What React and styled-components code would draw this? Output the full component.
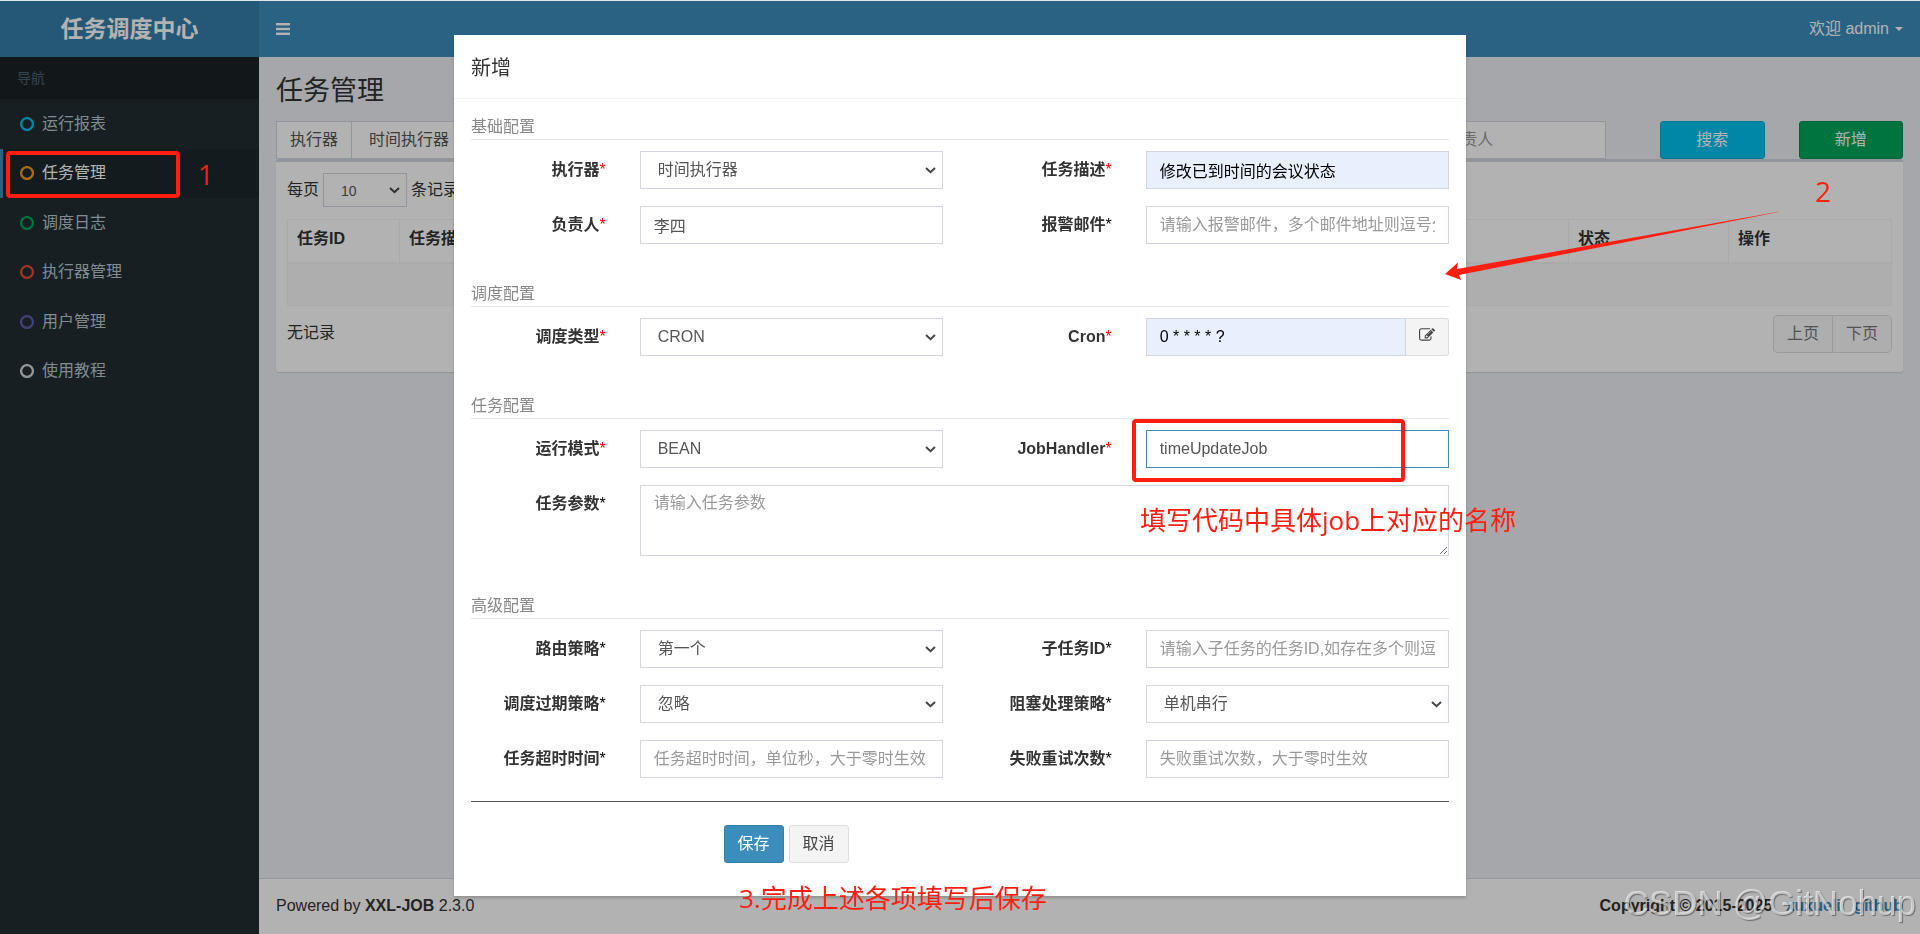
import React, { useState } from 'react';
import styled, { createGlobalStyle } from 'styled-components';

const chevron = `url("data:image/svg+xml,%3Csvg xmlns='http://www.w3.org/2000/svg' width='11' height='7' viewBox='0 0 11 7'%3E%3Cpath d='M1 1l4.5 4.2L10 1' fill='none' stroke='%23444' stroke-width='2'/%3E%3C/svg%3E")`;

const GlobalStyle = createGlobalStyle`
	*, *::before, *::after {
		box-sizing: border-box;
	}
	body {
		margin: 0;
		background: #ecf0f5;
		color: #333;
		font-family: "Liberation Sans", "Noto Sans CJK SC", sans-serif;
		font-size: 16px;
		line-height: 22px;
	}
	input, select, textarea, button {
		font: inherit;
	}
	a {
		color: #3c8dbc;
		text-decoration: none;
	}
`;

const TopLine = styled.div`
	height: 1px;
	background: #dfe6e3;
`;
const Shell = styled.div`
	display: grid;
	grid-template-columns: 259px minmax(0, 1fr);
	min-height: calc(100vh - 1px);
`;
const Sidebar = styled.aside`
	background: #222d32;
`;
const Logo = styled.a`
	display: block;
	height: 56px;
	background: #367fa9;
	color: #fff;
	font-size: 23px;
	font-weight: bold;
	line-height: 56px;
	text-align: center;
`;
const NavTitle = styled.div`
	height: 42px;
	padding: 10px 17px;
	background: #1a2226;
	color: #4b646f;
	font-size: 14px;
`;
const NavList = styled.nav`
	display: grid;
	grid-auto-rows: 1fr;
	height: 297px;
`;
const NavLink = styled.a`
	display: flex;
	align-items: center;
	gap: 8px;
	padding-left: 17px;
	border-left: 3px solid ${p => (p.$active ? '#3c8dbc' : 'transparent')};
	background: ${p => (p.$active ? '#1e282c' : 'transparent')};
	color: ${p => (p.$active ? '#fff' : '#b8c7ce')};
`;
const Main = styled.div`
	display: flex;
	flex-direction: column;
`;
const Navbar = styled.header`
	display: flex;
	align-items: center;
	justify-content: space-between;
	height: 56px;
	padding: 0 17px;
	background: #3c8dbc;
	color: #fff;
`;
const ToggleButton = styled.button`
	display: flex;
	padding: 0;
	border: 0;
	background: none;
	color: #fff;
`;
const UserLink = styled.a`
	display: flex;
	align-items: center;
	gap: 6px;
	color: #fff;
`;
const Caret = styled.span`
	border: 4px solid transparent;
	border-top-color: #fff;
	border-bottom: 0;
`;
const Content = styled.main`
	flex: 1;
	padding: 17px;
`;
const PageTitle = styled.h1`
	margin: 0 0 13px;
	font-size: 27px;
	font-weight: normal;
	line-height: 34px;
`;
const Filters = styled.div`
	display: grid;
	grid-template-columns: repeat(12, minmax(0, 1fr));
	margin: 0 -17px;
`;
const FilterCell = styled.div`
	display: flex;
	grid-column: span ${p => p.$span};
	padding: 0 17px;
`;
const Addon = styled.label`
	flex: none;
	padding: 7px 13px;
	border: 1px solid #d2d6de;
	border-right: 0;
	background: #fff;
	color: #555;
`;
const Input = styled.input`
	display: block;
	width: 100%;
	min-width: 0;
	height: 38px;
	padding: 6px 13px;
	border: 1px solid ${p => (p.$current ? '#3c8dbc' : '#d2d6de')};
	border-radius: 0;
	outline: 0;
	background: ${p => (p.$filled ? '#e8f0fe' : '#fff')};
	color: ${p => (p.$filled ? '#000' : '#555')};
	&::placeholder {
		color: #999;
	}
`;
const AuthorInput = styled(Input)`
	width: 223px;
`;
const Select = styled.select`
	display: block;
	width: 100%;
	min-width: 0;
	height: 38px;
	padding: 6px 17px;
	border: 1px solid #d2d6de;
	border-radius: 0;
	appearance: none;
	background: #fff ${chevron} no-repeat right 6px center;
	color: #555;
`;
const LengthSelect = styled(Select)`
	width: 84px;
	height: 34px;
	font-size: 14px;
`;
const TextArea = styled.textarea`
	display: block;
	width: 100%;
	height: 71px;
	padding: 6px 13px;
	border: 1px solid #d2d6de;
	outline: 0;
	color: #555;
	&::placeholder {
		color: #999;
	}
`;
const colors = {
	info: ['#00c0ef', '#00acd6', '#fff'],
	success: ['#00a65a', '#008d4c', '#fff'],
	primary: ['#3c8dbc', '#367fa9', '#fff'],
	plain: ['#f4f4f4', '#ddd', '#444'],
};
const Button = styled.button`
	width: ${p => (p.$block ? '100%' : 'auto')};
	height: 38px;
	padding: 0 13px;
	border: 1px solid ${p => colors[p.$kind][1]};
	border-radius: 3px;
	background: ${p => colors[p.$kind][0]};
	color: ${p => colors[p.$kind][2]};
`;
const Box = styled.section`
	padding: 11px;
	border-top: 3px solid #d2d6de;
	border-radius: 3px;
	background: #fff;
	box-shadow: 0 1px 1px rgba(0, 0, 0, 0.1);
`;
const LengthLabel = styled.label`
	display: flex;
	align-items: center;
	gap: 4px;
`;
const Table = styled.table`
	width: 100%;
	margin: 12px 0 9px;
	border: 1px solid #f4f4f4;
	border-spacing: 0;
	table-layout: fixed;
`;
const Th = styled.th`
	width: ${p => p.$width || 'auto'};
	height: 44px;
	padding: 8px 9px;
	border-right: 1px solid #f4f4f4;
	border-bottom: 2px solid #f4f4f4;
	text-align: left;
	vertical-align: top;
	&:last-child {
		border-right: 0;
	}
`;
const Td = styled.td`
	height: 41px;
	background: #f9f9f9;
`;
const TableFooter = styled.div`
	display: flex;
	justify-content: space-between;
	align-items: flex-start;
	padding-bottom: 8px;
`;
const TableInfo = styled.div`
	padding-top: 7px;
`;
const Pager = styled.div`
	display: flex;
`;
const PageButton = styled.button`
	height: 38px;
	padding: 0 13px;
	border: 1px solid #ddd;
	border-radius: ${p => (p.$last ? '0 5px 5px 0' : '5px 0 0 5px')};
	border-right-width: ${p => (p.$last ? '1px' : 0)};
	background: #fafafa;
	color: #777;
`;
const Footer = styled.footer`
	display: flex;
	justify-content: space-between;
	padding: 16px 17px 17px;
	border-top: 1px solid #d2d6de;
	background: #fff;
`;

const Backdrop = styled.div`
	position: fixed;
	inset: 1px 0 0;
	display: flex;
	align-items: flex-start;
	justify-content: center;
	padding-top: 34px;
	background: rgba(0, 0, 0, 0.3);
`;
const Modal = styled.div`
	position: relative;
	width: 1012px;
	max-width: 100%;
	background: #fff;
	box-shadow: 0 2px 3px rgba(0, 0, 0, 0.2);
`;
const ModalHeader = styled.header`
	padding: 22px 17px 19px;
	border-bottom: 1px solid #f4f4f4;
`;
const ModalTitle = styled.h4`
	margin: 0;
	font-size: 20px;
	font-weight: normal;
	line-height: 22px;
`;
const Form = styled.form`
	padding: 17px 17px 16px;
`;
const Section = styled.section`
	& + & {
		padding-top: 22px;
	}
`;
const SectionTitle = styled.h5`
	margin: 0 0 11px;
	height: 24px;
	border-bottom: 1px solid #e5e5e5;
	color: #888;
	font-size: 16px;
	font-weight: normal;
	line-height: 22px;
`;
const FormRow = styled.div`
	display: grid;
	grid-template-columns: minmax(0, 2fr) minmax(0, 4fr) minmax(0, 2fr) minmax(0, 4fr);
	margin: 0 -17px 17px;
`;
const FieldLabel = styled.label`
	padding: 8px 17px 0;
	font-weight: bold;
	text-align: right;
`;
const Star = styled.span`
	color: ${p => (p.$required ? 'red' : '#000')};
	font-weight: normal;
`;
const FieldCell = styled.div`
	display: flex;
	grid-column: span ${p => (p.$wide ? 3 : 1)};
	padding: 0 17px;
`;
const EditButton = styled.button`
	flex: none;
	display: flex;
	align-items: center;
	justify-content: center;
	width: 43px;
	height: 38px;
	padding: 0 0 4px;
	border: 1px solid #ddd;
	border-left: 0;
	border-radius: 0 3px 3px 0;
	background: #f4f4f4;
	color: #444;
`;
const Divider = styled.hr`
	margin: 23px 0;
	border: 0;
	border-top: 1px solid #555;
`;
const Actions = styled.div`
	display: flex;
	gap: 5px;
	margin-bottom: 17px;
	padding-left: calc(25% + 8px);
`;

const red = '#ff1e10';
const Frame = styled.div`
	position: absolute;
	left: ${p => p.$left}px;
	top: ${p => p.$top}px;
	width: ${p => p.$width}px;
	height: ${p => p.$height}px;
	border: 4px solid ${red};
	border-radius: 4px;
	pointer-events: none;
`;
const Note = styled.div`
	position: absolute;
	${p => (p.$right ? `right: ${p.$right}px` : `left: ${p.$left}px`)};
	top: ${p => p.$top}px;
	color: ${red};
	font-family: "Open Sans", "Noto Sans CJK SC", sans-serif;
	font-size: ${p => p.$size}px;
	line-height: 32px;
	white-space: nowrap;
	pointer-events: none;
`;
const Arrow = styled.svg`
	position: absolute;
	left: 991px;
	top: 173px;
	pointer-events: none;
`;
const Watermark = styled.div`
	position: fixed;
	right: 4px;
	bottom: 12px;
	color: rgba(255, 255, 255, 0.6);
	font-size: 35px;
	line-height: 38px;
	text-shadow: 1px 1px 1px rgba(0, 0, 0, 0.4);
	pointer-events: none;
`;

const navItems = [
	['运行报表', '#00c0ef'],
	['任务管理', '#f39c12'],
	['调度日志', '#00a65a'],
	['执行器管理', '#dd4b39'],
	['用户管理', '#605ca8'],
	['使用教程', '#d2d6de'],
];

const sections = [
	{
		title: '基础配置',
		rows: [
			[
				{ id: 'jobGroup', label: '执行器', required: true, options: ['时间执行器'] },
				{ id: 'jobDesc', label: '任务描述', required: true, value: '修改已到时间的会议状态', filled: true },
			],
			[
				{ id: 'author', label: '负责人', required: true, value: '李四' },
				{ id: 'alarmEmail', label: '报警邮件', placeholder: '请输入报警邮件，多个邮件地址则逗号分隔' },
			],
		],
	},
	{
		title: '调度配置',
		rows: [
			[
				{ id: 'scheduleType', label: '调度类型', required: true, options: ['CRON', '无', '固定速度'] },
				{ id: 'cron', label: 'Cron', required: true, value: '0 * * * * ?', filled: true, editable: true },
			],
		],
	},
	{
		title: '任务配置',
		rows: [
			[
				{ id: 'glueType', label: '运行模式', required: true, options: ['BEAN'] },
				{ id: 'handler', label: 'JobHandler', required: true, value: 'timeUpdateJob', current: true },
			],
			[{ id: 'param', label: '任务参数', placeholder: '请输入任务参数', multiline: true }],
		],
	},
	{
		title: '高级配置',
		rows: [
			[
				{ id: 'route', label: '路由策略', options: ['第一个', '最后一个', '轮询'] },
				{ id: 'childJob', label: '子任务ID', placeholder: '请输入子任务的任务ID,如存在多个则逗号分隔' },
			],
			[
				{ id: 'misfire', label: '调度过期策略', options: ['忽略', '立即执行一次'] },
				{ id: 'block', label: '阻塞处理策略', options: ['单机串行', '丢弃后续调度'] },
			],
			[
				{ id: 'timeout', label: '任务超时时间', placeholder: '任务超时时间，单位秒，大于零时生效' },
				{ id: 'retry', label: '失败重试次数', placeholder: '失败重试次数，大于零时生效' },
			],
		],
	},
];

const initialValues = {};
sections.forEach(s => s.rows.flat().forEach(f => {
	initialValues[f.id] = f.value || (f.options ? f.options[0] : '');
}));

const EditIcon = () => (
	<svg width="16" height="16" viewBox="0 0 1792 1792" fill="currentColor">
		<path d="M888 1184l116-116-152-152-116 116v56h96v96h56zm440-720q-16-16-33 1l-350 350q-17 17-1 33t33-1l350-350q17-17 1-33zm80 594v190q0 119-84.5 203.5t-203.5 84.5h-832q-119 0-203.5-84.5t-84.5-203.5v-832q0-119 84.5-203.5t203.5-84.5h832q63 0 117 25 15 7 18 23 3 17-9 29l-49 49q-14 14-32 8-23-6-45-6h-832q-66 0-113 47t-47 113v832q0 66 47 113t113 47h832q66 0 113-47t47-113v-126q0-13 9-22l64-64q15-15 35-7t20 29zm-96-738l288 288-672 672h-288v-288zm444 132l-92 92-288-288 92-92q28-28 68-28t68 28l152 152q28 28 28 68t-28 68z" />
	</svg>
);

function Field({ field, value, onChange }) {
	const props = { id: field.id, value, onChange, placeholder: field.placeholder };
	let control;
	if (field.options) {
		control = (
			<Select id={field.id} value={value} onChange={onChange}>
				{field.options.map(o => <option key={o}>{o}</option>)}
			</Select>
		);
	} else if (field.multiline) {
		control = <TextArea {...props} />;
	} else {
		control = <Input type="text" {...props} $filled={field.filled} $current={field.current} />;
	}
	return (
		<>
			<FieldLabel htmlFor={field.id}>
				{field.label}<Star $required={field.required}>*</Star>
			</FieldLabel>
			<FieldCell $wide={field.multiline}>
				{control}
				{field.editable && <EditButton type="button" aria-label="编辑 Cron"><EditIcon /></EditButton>}
			</FieldCell>
		</>
	);
}

function AddJobModal() {
	const [values, setValues] = useState(initialValues);

	const handleChange = e => {
		setValues({ ...values, [e.target.id]: e.target.value });
	}

	return (
		<Modal role="dialog" aria-labelledby="modalTitle">
			<ModalHeader>
				<ModalTitle id="modalTitle">新增</ModalTitle>
			</ModalHeader>
			<Form onSubmit={e => e.preventDefault()}>
				{sections.map(section => (
					<Section key={section.title}>
						<SectionTitle>{section.title}</SectionTitle>
						{section.rows.map((row, i) => (
							<FormRow key={i}>
								{row.map(field => (
									<Field key={field.id} field={field} value={values[field.id]} onChange={handleChange} />
								))}
							</FormRow>
						))}
					</Section>
				))}
				<Divider />
				<Actions>
					<Button type="submit" $kind="primary">保存</Button>
					<Button type="button" $kind="plain">取消</Button>
				</Actions>
			</Form>
			<Frame $left={678} $top={384} $width={273} $height={63} />
			<Note $left={686} $top={469} $size={26}>填写代码中具体job上对应的名称</Note>
			<Note $left={285} $top={847} $size={26}>3.完成上述各项填写后保存</Note>
			<Arrow width="345" height="75" viewBox="0 0 345 75">
				<path d="M0 66L13 54.500L12 61L341 2.500L14 67L16 72Z" fill={red} />
			</Arrow>
		</Modal>
	);
}

function App() {
	return (
		<>
			<GlobalStyle />
			<TopLine />
			<Shell>
				<Sidebar>
					<Logo href="#">任务调度中心</Logo>
					<NavTitle>导航</NavTitle>
					<NavList>
						{navItems.map(([name, color]) => (
							<NavLink key={name} href="#" $active={name === '任务管理'}>
								<svg width="14" height="14" viewBox="0 0 14 14">
									<circle cx="7" cy="7" r="5.9" fill="none" stroke={color} strokeWidth="2.3" />
								</svg>
								{name}
							</NavLink>
						))}
					</NavList>
				</Sidebar>
				<Main>
					<Navbar>
						<ToggleButton aria-label="切换导航">
							<svg width="14" height="12" viewBox="0 0 14 12" fill="currentColor">
								<rect width="14" height="2.400" />
								<rect y="4.800" width="14" height="2.400" />
								<rect y="9.600" width="14" height="2.400" />
							</svg>
						</ToggleButton>
						<UserLink href="#">欢迎 admin <Caret /></UserLink>
					</Navbar>
					<Content>
						<PageTitle>任务管理</PageTitle>
						<Filters>
							<FilterCell $span={3}>
								<Addon htmlFor="filterGroup">执行器</Addon>
								<Select id="filterGroup"><option>时间执行器</option></Select>
							</FilterCell>
							<FilterCell $span={1}>
								<Select aria-label="状态"><option>全部</option></Select>
							</FilterCell>
							<FilterCell $span={2}>
								<Input aria-label="任务描述" placeholder="请输入任务描述" />
							</FilterCell>
							<FilterCell $span={2}>
								<Input aria-label="JobHandler" placeholder="请输入JobHandler" />
							</FilterCell>
							<FilterCell $span={2}>
								<AuthorInput aria-label="负责人" placeholder="请输入负责人" />
							</FilterCell>
							<FilterCell $span={1}><Button $kind="info" $block>搜索</Button></FilterCell>
							<FilterCell $span={1}><Button $kind="success" $block>新增</Button></FilterCell>
						</Filters>
						<Box>
							<LengthLabel>
								每页
								<LengthSelect><option>10</option><option>20</option></LengthSelect>
								条记录
							</LengthLabel>
							<Table>
								<thead>
									<tr>
										<Th $width="112px">任务ID</Th>
										<Th>任务描述</Th>
										<Th>调度类型</Th>
										<Th>运行模式</Th>
										<Th>负责人</Th>
										<Th $width="160px">状态</Th>
										<Th $width="162px">操作</Th>
									</tr>
								</thead>
								<tbody>
									<tr><Td colSpan={7} /></tr>
								</tbody>
							</Table>
							<TableFooter>
								<TableInfo>无记录</TableInfo>
								<Pager>
									<PageButton>上页</PageButton>
									<PageButton $last>下页</PageButton>
								</Pager>
							</TableFooter>
						</Box>
					</Content>
					<Footer>
						<span>Powered by <b>XXL-JOB</b> 2.3.0</span>
						<b>Copyright © 2015-2025 &nbsp; <a href="#">xuxueli</a> &nbsp; <a href="#">github</a></b>
					</Footer>
				</Main>
			</Shell>
			<Backdrop>
				<AddJobModal />
			</Backdrop>
			<Frame $left={6} $top={151} $width={174} $height={47} />
			<Note $left={198} $top={158} $size={28}>1</Note>
			<Note $right={89} $top={175} $size={28}>2</Note>
			<Watermark>CSDN @GitNohup</Watermark>
		</>
	);
}

export default App;
